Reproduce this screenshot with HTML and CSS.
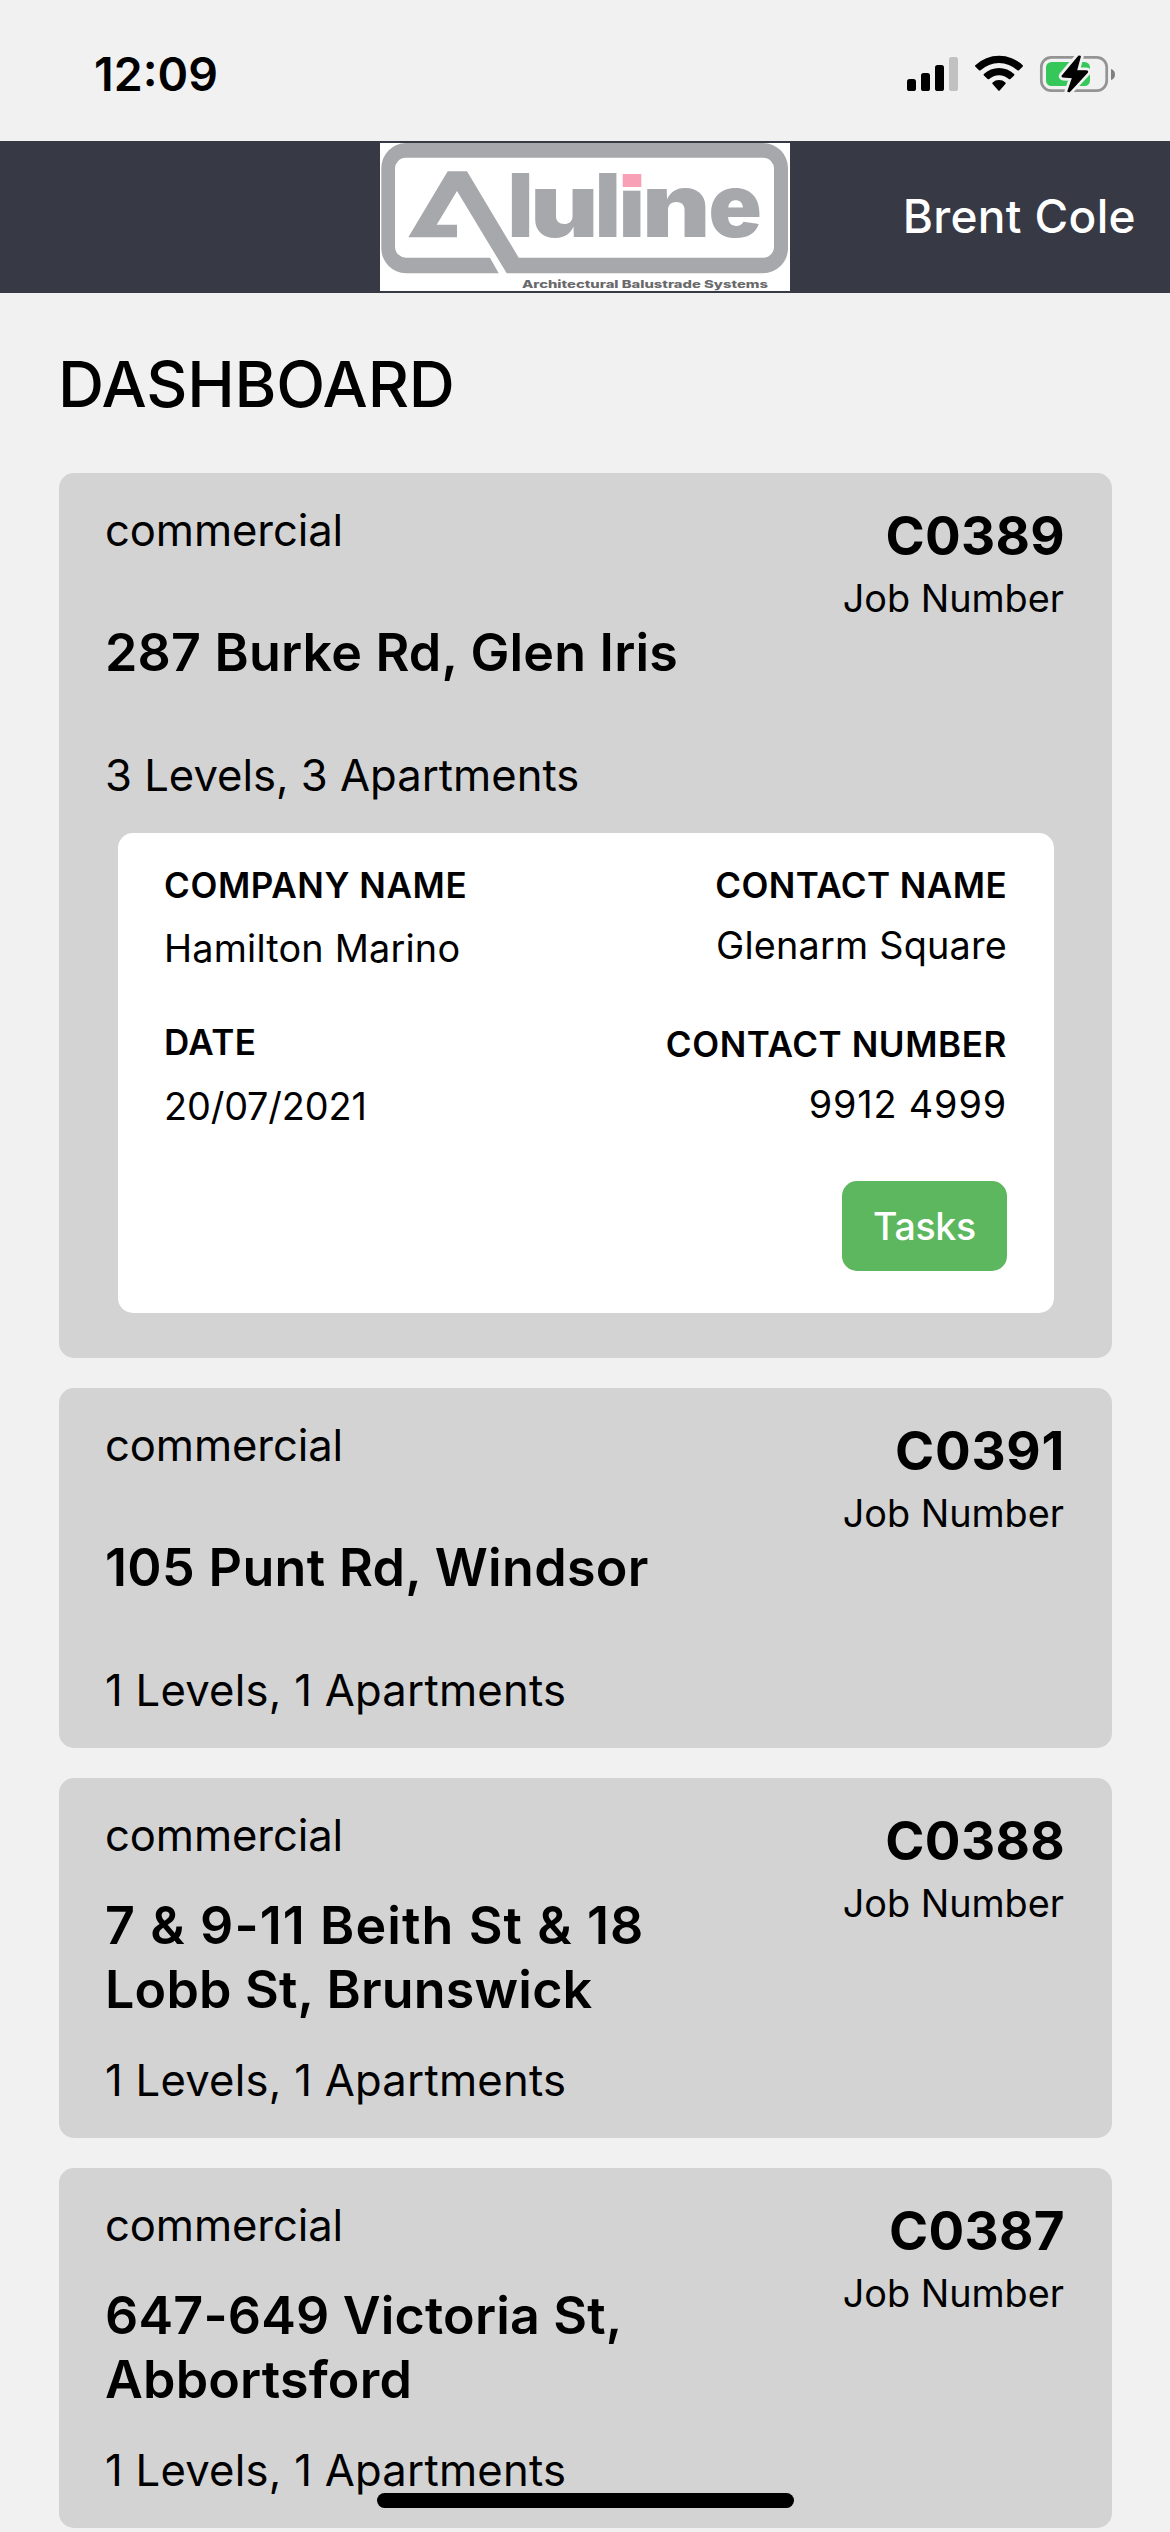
FILE: index.html
```html
<!DOCTYPE html>
<html lang="en">
<head>
<meta charset="utf-8">
<title>Dashboard</title>
<link rel="stylesheet" href="styles.css">
</head>
<body>
<div class="screen">
  <div class="status">
    <span class="time">12:09</span>
    <svg class="status-icons" viewBox="900 50 220 48" width="220" height="48" aria-hidden="true">
      <!-- signal -->
      <rect x="907" y="79" width="9" height="12" rx="2.6"/>
      <rect x="921" y="73" width="9" height="18" rx="2.6"/>
      <rect x="935" y="65" width="9" height="26" rx="2.6"/>
      <rect x="949" y="57" width="9" height="34" rx="2.6" fill="#c1c1c1"/>
      <!-- wifi -->
      <path d="M975.3 65.2Q974.7 66 975.5 66.8L979 70.2Q979.8 70.9 980.6 70.2A27.2 27.2 0 0 1 1017.4 70.2Q1018.2 70.9 1019 70.2L1022.5 66.8Q1023.3 66 1022.7 65.2A34.6 34.6 0 0 0 975.3 65.2Z"/>
      <path d="M983.9 73.9Q983.1 74.7 983.9 75.5L987.6 79Q988.4 79.7 989.2 79A14.6 14.6 0 0 1 1008.8 79Q1009.6 79.7 1010.4 79L1014.1 75.5Q1014.9 74.7 1014.1 73.9A22 22 0 0 0 983.9 73.9Z"/>
      <path d="M992.6 82.4Q991.8 83.2 992.6 84L998.1 90.3Q999 91.3 999.9 90.3L1005.4 84Q1006.2 83.2 1005.4 82.4A9.6 9.6 0 0 0 992.6 82.4Z"/>
      <!-- battery -->
      <rect x="1041.3" y="57.3" width="65.4" height="33.4" rx="10" fill="none" stroke="#949494" stroke-width="2.7"/>
      <path d="M1111 69V80Q1115 78.6 1115 74.5T1111 69Z" fill="#808080"/>
      <rect x="1046" y="62" width="44" height="24" rx="5.5" fill="#35c759"/>
      <path class="bolt-halo" d="M1078.8 56.3L1062.5 75.6Q1061.8 76.8 1063 76.9L1072.8 77.6L1068 91.3L1069.5 91.5L1087.3 72.2Q1087.8 71 1086.6 71L1076.3 70.7L1080.2 56.5Z"/>
      <path class="bolt" d="M1078.8 56.3L1062.5 75.6Q1061.8 76.8 1063 76.9L1072.8 77.6L1068 91.3L1069.5 91.5L1087.3 72.2Q1087.8 71 1086.6 71L1076.3 70.7L1080.2 56.5Z"/>
    </svg>
  </div>

  <header class="header">
    <svg class="logo" viewBox="0 0 410 148" width="410" height="148" role="img" aria-label="Aluline Architectural Balustrade Systems">
      <rect width="410" height="148" fill="#fff"/>
      <path class="mark" d="M118.7 130.3H26A25 25 0 0 1 1.3 105V25A25 25 0 0 1 26 0H383A25 25 0 0 1 408 25V105A25 25 0 0 1 383 130.3H126.7L77 48L56.7 81.7H77V94.3H28.3L67.7 28.3H87L138.7 114.7H383A11 11 0 0 0 394 103.7V26A11 11 0 0 0 383 14.7H26A11 11 0 0 0 15 26V104A11 11 0 0 0 26 114.7H110Z"/>
      <g class="word">
        <text x="127.5" y="94.3">l</text>
        <text x="150" y="94.3" textLength="68.6" lengthAdjust="spacingAndGlyphs">u</text>
        <text x="214.8" y="94.3">l</text>
        <text x="238.8" y="94.3">i</text>
        <text x="262" y="94.3" textLength="68.6" lengthAdjust="spacingAndGlyphs">n</text>
        <text x="328.5" y="94.3">e</text>
      </g>
      <rect x="240" y="20" width="24" height="27.7" fill="#fff"/>
      <rect x="242.7" y="31" width="18.6" height="13" fill="#f8a1b6"/>
      <text class="tagline" x="142" y="145.3" textLength="246" lengthAdjust="spacingAndGlyphs">Architectural Balustrade Systems</text>
    </svg>
    <span class="user">Brent Cole</span>
  </header>

  <h1 class="title">DASHBOARD</h1>

  <main class="jobs">
    <article class="card">
      <div class="summary">
        <div class="job">
          <p class="kind">commercial</p>
          <h2 class="address">287 Burke Rd, Glen Iris</h2>
          <p class="size">3 Levels, 3 Apartments</p>
        </div>
        <div class="ref">
          <p class="number">C0389</p>
          <p class="caption">Job Number</p>
        </div>
      </div>
      <div class="details">
        <dl class="col">
          <dt class="company">COMPANY NAME</dt>
          <dd>Hamilton Marino</dd>
          <dt>DATE</dt>
          <dd class="tight">20/07/2021</dd>
        </dl>
        <div class="col-right">
          <dl class="col">
            <dt>CONTACT NAME</dt>
            <dd>Glenarm Square</dd>
            <dt class="company">CONTACT NUMBER</dt>
            <dd class="wide">9912 4999</dd>
          </dl>
          <button class="tasks">Tasks</button>
        </div>
      </div>
    </article>

    <article class="card">
      <div class="summary">
        <div class="job">
          <p class="kind">commercial</p>
          <h2 class="address single">105 Punt Rd, Windsor</h2>
          <p class="size ones">1 Levels, 1 Apartments</p>
        </div>
        <div class="ref">
          <p class="number loose">C0391</p>
          <p class="caption">Job Number</p>
        </div>
      </div>
    </article>

    <article class="card">
      <div class="summary">
        <div class="job">
          <p class="kind">commercial</p>
          <h2 class="address"><span><span class="wide">7 &amp; 9-11 Beith St &amp; 18</span> Lobb St, Brunswick</span></h2>
          <p class="size ones">1 Levels, 1 Apartments</p>
        </div>
        <div class="ref">
          <p class="number">C0388</p>
          <p class="caption">Job Number</p>
        </div>
      </div>
    </article>

    <article class="card">
      <div class="summary">
        <div class="job">
          <p class="kind">commercial</p>
          <h2 class="address">647-649 Victoria St, Abbortsford</h2>
          <p class="size ones">1 Levels, 1 Apartments</p>
        </div>
        <div class="ref">
          <p class="number">C0387</p>
          <p class="caption">Job Number</p>
        </div>
      </div>
    </article>
  </main>

  <div class="home-bar"></div>
</div>
</body>
</html>
```
FILE: styles.css
```css
* {
  box-sizing: border-box;
  margin: 0;
  padding: 0;
}

body {
  background: #f1f1f1;
  color: #000;
  font-family: Inter, "Liberation Sans", sans-serif;
}

.screen {
  position: relative;
  width: 1170px;
  height: 2532px;
  overflow: hidden;
}

/* Status bar */
.status {
  display: flex;
  align-items: center;
  justify-content: space-between;
  height: 141px;
  padding: 7px 50px 0 94px;
}

.time {
  font-size: 46.5px;
  font-weight: 600;
}

.status-icons {
  display: block;
}

.bolt-halo {
  fill: #f1f1f1;
  stroke: #f1f1f1;
  stroke-width: 7;
  stroke-linejoin: round;
}

.bolt {
  stroke: #000;
  stroke-width: 1.4;
  stroke-linejoin: round;
}

/* Header */
.header {
  display: grid;
  grid-template-columns: 1fr 410px 1fr;
  align-items: center;
  height: 152px;
  background: #373945;
}

.logo {
  grid-column: 2;
  display: block;
}

.mark,
.word {
  fill: #a7a8ac;
}

.word {
  font-size: 88px;
  font-weight: 900;
}

.tagline {
  fill: #6a6a6c;
  font-size: 10.5px;
  font-weight: 800;
}

.user {
  justify-self: end;
  padding: 0 34px 2px 0;
  color: #fff;
  font-size: 46px;
  font-weight: 500;
  letter-spacing: 0.35px;
}

.title {
  padding-left: 58px;
  font-size: 63.8px;
  font-weight: 450;
  letter-spacing: -0.2px;
  line-height: 181px;
  height: 180px;
}

/* Job cards */
.jobs {
  display: flex;
  flex-direction: column;
  gap: 30px;
  padding: 0 58px 0 59px;
}

.card {
  border-radius: 15px;
  background: #d3d3d3;
}

.summary {
  display: flex;
  justify-content: space-between;
  height: 360px;
  padding: 30px 47px 31px 46px;
}

.job {
  display: grid;
  grid-template-rows: 54px 191px 54px;
  width: 600px;
}

.kind,
.size {
  font-size: 43.6px;
  line-height: 55px;
}

.kind {
  letter-spacing: -0.1px;
}

.size.ones {
  letter-spacing: 0.25px;
}

.address {
  align-self: center;
  font-size: 52px;
  font-weight: 600;
  letter-spacing: 0.18px;
  line-height: 64px;
}

.address.single {
  letter-spacing: 0.35px;
}

.ref {
  padding-top: 1px;
  text-align: right;
}

.number {
  font-size: 53px;
  font-weight: 700;
  letter-spacing: 0.3px;
  line-height: 64px;
}

.caption {
  margin: 7px 1px 0 0;
  font-size: 37.8px;
  line-height: 46px;
}

.wide {
  letter-spacing: 1.1px;
}

.loose {
  letter-spacing: 0.7px;
}

/* Expanded details */
.details {
  display: flex;
  justify-content: space-between;
  height: 480px;
  margin: 0 58px 0 59px;
  padding: 31px 47px 42px 46px;
  border-radius: 15px;
  background: #fff;
}

.card:has(.details) {
  padding-bottom: 45px;
}

.col {
  display: grid;
  grid-template-rows: 61px 96px 62px 46px;
}

.col dt {
  font-size: 35px;
  font-weight: 600;
  letter-spacing: 0.42px;
  line-height: 42px;
}

.col .company {
  letter-spacing: 0.6px;
}

.col dd {
  font-size: 37.8px;
  letter-spacing: 0.2px;
  line-height: 46px;
}

.col .wide {
  letter-spacing: 0.85px;
}

.col .tight {
  letter-spacing: -0.13px;
}

.col-right {
  display: flex;
  flex-direction: column;
  align-items: flex-end;
  justify-content: space-between;
  text-align: right;
}

.col-right .col {
  grid-template-rows: 58px 101px 58px 46px;
}

.tasks {
  width: 165px;
  height: 90px;
  padding-top: 1px;
  border: 0;
  border-radius: 15px;
  background: #5db75e;
  color: #fff;
  font: 500 37.5px/89px Inter, "Liberation Sans", sans-serif;
  letter-spacing: -0.3px;
}

.home-bar {
  position: absolute;
  left: 377px;
  bottom: 24px;
  width: 417px;
  height: 15px;
  border-radius: 8px;
  background: #000;
}
```
